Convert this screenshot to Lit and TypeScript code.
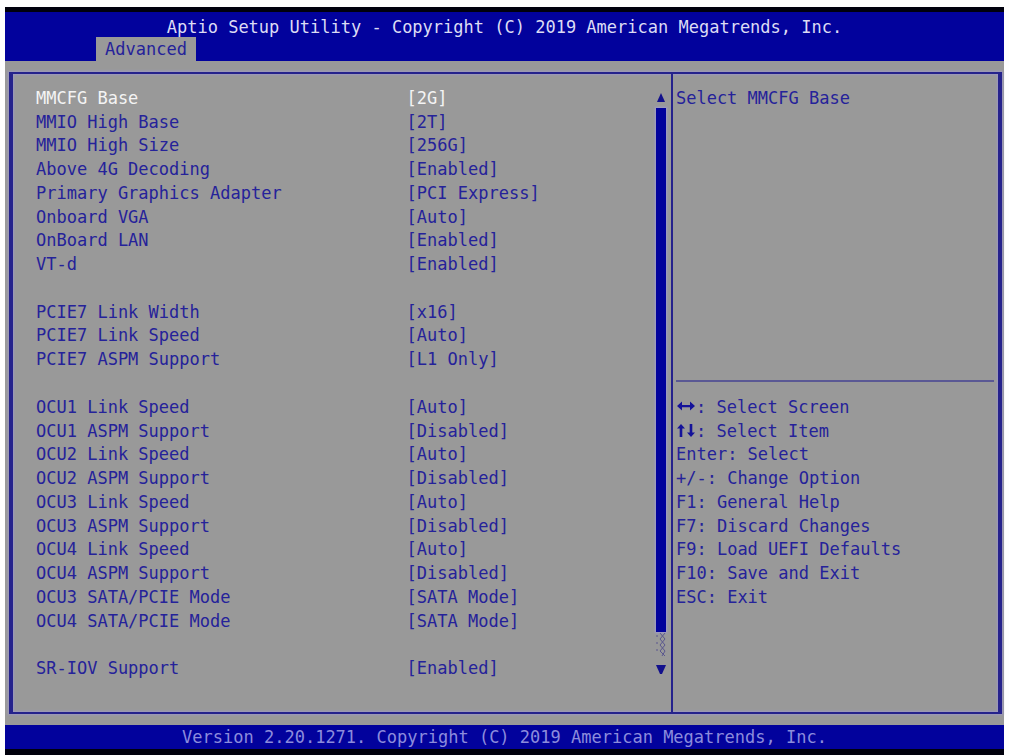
import { LitElement, html, css, svg, nothing } from "lit";
import { customElement, property } from "lit/decorators.js";
import { classMap } from "lit/directives/class-map.js";

type Setting = { label: string; value: string } | null;

const SETTINGS: Setting[] = [
  { label: "MMCFG Base", value: "2G" },
  { label: "MMIO High Base", value: "2T" },
  { label: "MMIO High Size", value: "256G" },
  { label: "Above 4G Decoding", value: "Enabled" },
  { label: "Primary Graphics Adapter", value: "PCI Express" },
  { label: "Onboard VGA", value: "Auto" },
  { label: "OnBoard LAN", value: "Enabled" },
  { label: "VT-d", value: "Enabled" },
  null,
  { label: "PCIE7 Link Width", value: "x16" },
  { label: "PCIE7 Link Speed", value: "Auto" },
  { label: "PCIE7 ASPM Support", value: "L1 Only" },
  null,
  { label: "OCU1 Link Speed", value: "Auto" },
  { label: "OCU1 ASPM Support", value: "Disabled" },
  { label: "OCU2 Link Speed", value: "Auto" },
  { label: "OCU2 ASPM Support", value: "Disabled" },
  { label: "OCU3 Link Speed", value: "Auto" },
  { label: "OCU3 ASPM Support", value: "Disabled" },
  { label: "OCU4 Link Speed", value: "Auto" },
  { label: "OCU4 ASPM Support", value: "Disabled" },
  { label: "OCU3 SATA/PCIE Mode", value: "SATA Mode" },
  { label: "OCU4 SATA/PCIE Mode", value: "SATA Mode" },
  null,
  { label: "SR-IOV Support", value: "Enabled" },
];

const arrowsAcross = svg`<path d="M1 6L6 1.5V5H14V1.5L19 6L14 10.5V7.2H6V10.5Z" />`;
const arrowsUpDown = svg`<path d="M5 0L9 4.5H6.3V13H3.7V4.5H1ZM15 13L11 8.5H13.7V0H16.3V8.5H19Z" />`;

const KEYS = [
  { icon: arrowsAcross, box: "0 0 20 14", name: "Left and right arrows", keys: "", text: "Select Screen" },
  { icon: arrowsUpDown, box: "0 0 20 14", name: "Up and down arrows", keys: "", text: "Select Item" },
  { keys: "Enter", text: "Select" },
  { keys: "+/-", text: "Change Option" },
  { keys: "F1", text: "General Help" },
  { keys: "F7", text: "Discard Changes" },
  { keys: "F9", text: "Load UEFI Defaults" },
  { keys: "F10", text: "Save and Exit" },
  { keys: "ESC", text: "Exit" },
];

@customElement("setting-list")
class SettingList extends LitElement {
  @property({ type: Number }) selected = 0;

  static styles = css`
    :host {
      display: grid;
      grid-auto-rows: minmax(0, 1fr);
    }
    .row {
      display: grid;
      grid-template-columns: 3fr 2fr;
      column-gap: 4px;
      align-items: center;
      min-height: 20px;
    }
    .selected {
      color: #f4f4f4;
    }
    .value {
      justify-self: start;
      padding: 0;
      border: 0;
      background: none;
      color: inherit;
      font: inherit;
      white-space: nowrap;
    }
  `;

  render() {
    return SETTINGS.map((setting, i) =>
      setting
        ? html`<div class=${classMap({ row: true, selected: i === this.selected })}>
            <label for="setting-${i}">${setting.label}</label>
            <button class="value" id="setting-${i}">[${setting.value}]</button>
          </div>`
        : html`<div class="row"></div>`
    );
  }
}

@customElement("scroll-track")
class ScrollTrack extends LitElement {
  static styles = css`
    :host {
      display: flex;
      flex-direction: column;
      align-items: center;
    }
    .arrow {
      display: grid;
      place-items: center;
      width: 100%;
      height: 22px;
    }
    .arrow svg {
      fill: #12108c;
    }
    .thumb {
      flex: 1;
      width: 10px;
      background: #02029c;
      box-shadow: 0 0 2px 1px #a09ccc;
    }
    .rest {
      width: 10px;
      height: 26px;
    }
  `;

  render() {
    return html`
      <div class="arrow"><svg width="10" height="9" viewBox="0 0 10 9"><path d="M5 0L9 9H1Z" /></svg></div>
      <div class="thumb"></div>
      <svg class="rest" viewBox="0 0 10 26" fill="none" stroke="#5a578f" stroke-width="1">
        <path d="M4 1L9 7L4 13L9 19L6 24M9 1L4 7L9 13L4 19L9 24" />
        <path d="M1 3V5M1 10V12M1 17V19" />
      </svg>
      <div class="arrow"><svg width="10" height="9" viewBox="0 0 10 9"><path d="M0 0H10L6 9H4Z" /></svg></div>
    `;
  }
}

@customElement("help-panel")
class HelpPanel extends LitElement {
  static styles = css`
    :host {
      display: grid;
      grid-template-rows: repeat(25, minmax(0, 1fr));
    }
    .about {
      grid-row: 1 / 13;
      line-height: 24px;
    }
    .rule {
      grid-row: 13;
      align-self: center;
      width: 100%;
      margin: 0 0 4px;
      border: 0;
      border-top: 2px solid #5a5894;
    }
    .keys {
      grid-row: 14 / 23;
      display: grid;
      grid-auto-rows: minmax(0, 1fr);
      align-items: center;
      margin: 0;
      padding: 0;
      list-style: none;
    }
    .key {
      display: flex;
      align-items: center;
      white-space: pre;
    }
    .icon {
      fill: #14129a;
    }
  `;

  render() {
    return html`
      <div class="about">Select MMCFG Base</div>
      <hr class="rule" />
      <ul class="keys">
        ${KEYS.map(
          (k) => html`<li class="key">${k.icon
            ? html`<svg class="icon" role="img" aria-label=${k.name} width="20" height="14" viewBox=${k.box}>${k.icon}</svg>`
            : nothing}<span>${k.keys}: ${k.text}</span></li>`
        )}
      </ul>
    `;
  }
}

@customElement("app-root")
class AppRoot extends LitElement {
  static styles = css`
    :host {
      display: flex;
      flex-direction: column;
      box-sizing: border-box;
      min-height: 100vh;
      padding: 7px 5px 1px;
      background: #fefefe;
      color: #25229a;
      font: 17px/20px "DejaVu Sans Mono", monospace;
    }
    .top {
      display: flex;
      flex-direction: column;
      border-top: 5px solid #00000c;
      background: #02029c;
    }
    .title {
      margin: 0;
      padding: 5px 0 0;
      color: #dcdcf4;
      font: inherit;
      text-align: center;
      white-space: nowrap;
    }
    .tabs {
      display: flex;
      padding-left: 91px;
    }
    .tab {
      padding: 2px 9px;
      border: 0;
      background: #999;
      color: #25229a;
      font: inherit;
    }
    .body {
      display: grid;
      flex: 1;
      padding: 11px 2px 11px 4px;
      background: #999;
    }
    .frame {
      display: grid;
      grid-template-columns: 67fr 33fr;
      border: solid #25228c;
      border-width: 2px 4px;
      box-shadow: 0 0 2px 1px #9c98c0, inset 0 0 2px 1px #9c98c0;
    }
    .left {
      display: grid;
      grid-template-columns: 1fr 20px;
      padding: 12px 0 32px 23px;
      border-right: 2px solid #25228c;
    }
    .right {
      display: grid;
      padding: 12px 4px 32px 3px;
    }
    .bottom {
      padding: 2px 0;
      border-bottom: 6px solid #00000c;
      background: #02029c;
      color: #8c8cdc;
      text-align: center;
      white-space: nowrap;
    }
  `;

  render() {
    return html`
      <header class="top">
        <h1 class="title">Aptio Setup Utility - Copyright (C) 2019 American Megatrends, Inc.</h1>
        <nav class="tabs"><button class="tab">Advanced</button></nav>
      </header>
      <main class="body">
        <div class="frame">
          <section class="left">
            <setting-list></setting-list>
            <scroll-track></scroll-track>
          </section>
          <aside class="right"><help-panel></help-panel></aside>
        </div>
      </main>
      <footer class="bottom">Version 2.20.1271. Copyright (C) 2019 American Megatrends, Inc.</footer>
    `;
  }
}
